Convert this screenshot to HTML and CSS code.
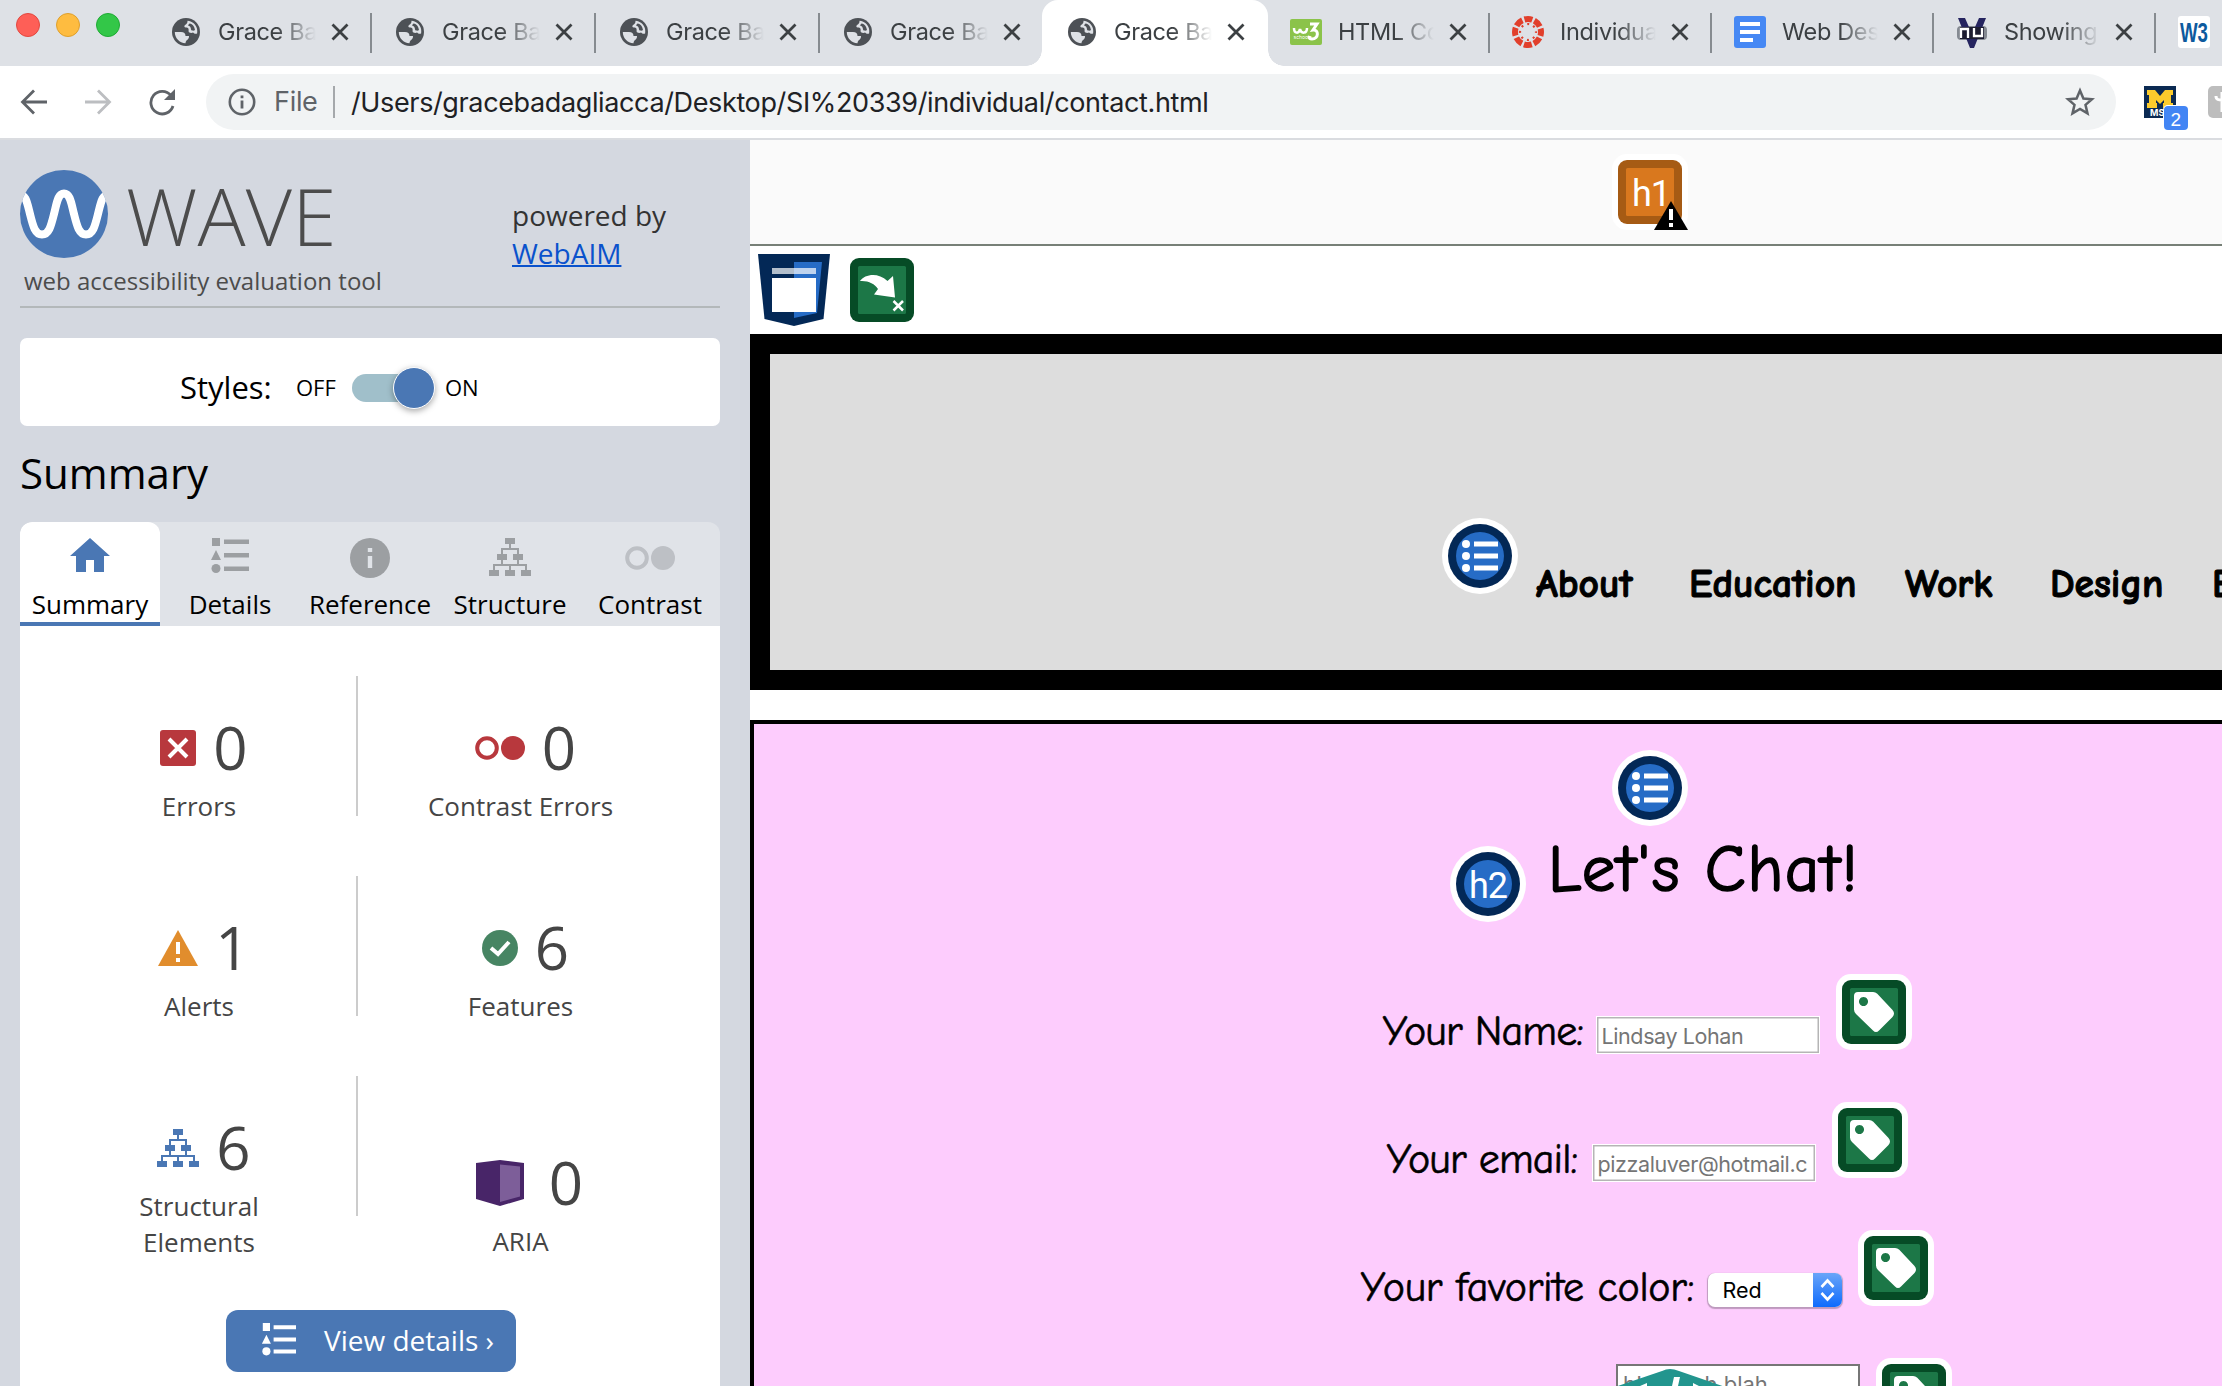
FILE: index.html
```html
<!DOCTYPE html>
<html lang="en">
<head>
<meta charset="utf-8">
<title>Contact</title>
<link rel="stylesheet" href="styles.css">
</head>
<body>
<svg class="defs" width="0" height="0">
  <symbol id="globe" viewBox="0 0 28 28"><circle cx="14" cy="14" r="14" fill="#4d5156"/><path d="M15.500 2.700C20 3 23.500 6 24.800 10c.6 2 .5 4 .3 5.500-1.500.8-3 .2-4-1-1.500.8-4 .6-4.500-1V11.500c0-1.500-1-2-2.800-2-1.500 0-1.800-1-1-2.200C14 6 15.500 6 15.500 2.700zM2.800 14H9c3 0 4.500 1.500 4.500 4h3.500c.3 4-3.200 3.300-3.500 7.200C7.500 25 2.800 20 2.800 14z" fill="#dee1e6"/><path d="M17.500 5.500c3.500.5 5 3.500 5.500 6.500-1 1-3.500 1-4-.500 0-2.500-1.200-3.500-3-4 .3-.8.8-1.400 1.500-2z" fill="#4d5156"/></symbol>
  <symbol id="x" viewBox="0 0 18 18"><path d="M1.500 1.500l15 15M16.500 1.500l-15 15" stroke="#3c4043" stroke-width="2.800" fill="none"/></symbol>
  <symbol id="list" viewBox="0 0 38 42"><path d="M1 0h8v9H1zM5 13l5 10H0zM13 2.500h25v4.500H13zM13 16h25v4.500H13zM13 29.500h25V34H13z"/><circle cx="5" cy="31.500" r="4.500"/></symbol>
  <symbol id="tree" viewBox="0 0 42 38"><path d="M16 0h10v6H16zM8 16h10v6H8zM24 16h10v6H24zM0 32h10v6H0zM16 32h10v6H16zM32 32h10v6H32z"/><path d="M21 6v5M13 16v-5h16v5M13 22v5M29 22v5M5 32v-5h32v5M21 27v5" fill="none" stroke="currentColor" stroke-width="2"/></symbol>
  <symbol id="pair" viewBox="0 0 50 24"><circle cx="12" cy="12" r="9.800" fill="none" stroke="currentColor" stroke-width="4"/><circle cx="38" cy="12" r="12"/></symbol>
  <symbol id="ul" viewBox="0 0 76 76"><circle cx="38" cy="38" r="38" fill="#fff"/><circle cx="38" cy="38" r="32" fill="#032856"/><circle cx="38" cy="38" r="24" fill="#266cc6"/><path d="M32 23.500h24v5H32zM32 35.500h24v5H32zM32 47.500h24v5H32z" fill="#fff"/><circle cx="24" cy="26" r="4" fill="#fff"/><circle cx="24" cy="38" r="4" fill="#fff"/><circle cx="24" cy="50" r="4" fill="#fff"/></symbol>
  <symbol id="tag" viewBox="0 0 76 76"><rect width="76" height="76" rx="15" fill="#fff"/><rect x="6" y="6" width="64" height="64" rx="9" fill="#064b26"/><rect x="14" y="14" width="48" height="48" rx="1.500" fill="#1c7747"/><path fill-rule="evenodd" d="M22 18h15q2.500 0 4.300 1.800L56.500 36q3 3.500 0 7L43 56.500q-3 3-6 0L20 40q-2-2-2-4.500V22q0-4 4-4zM27.500 23a4.500 4.500 0 1 0 .01 0z" fill="#fff"/></symbol>
</svg>

<header class="browser">
  <div class="tabstrip">
    <div class="lights"><i class="light red"></i><i class="light yellow"></i><i class="light green"></i></div>
    <div class="tab"><svg class="globe"><use href="#globe"/></svg><span class="title">Grace Badagliacca</span><svg class="close"><use href="#x"/></svg></div>
    <div class="tab"><svg class="globe"><use href="#globe"/></svg><span class="title">Grace Badagliacca</span><svg class="close"><use href="#x"/></svg></div>
    <div class="tab"><svg class="globe"><use href="#globe"/></svg><span class="title">Grace Badagliacca</span><svg class="close"><use href="#x"/></svg></div>
    <div class="tab last"><svg class="globe"><use href="#globe"/></svg><span class="title">Grace Badagliacca</span><svg class="close"><use href="#x"/></svg></div>
    <div class="tab active"><svg class="globe"><use href="#globe"/></svg><span class="title">Grace Badagliacca</span><svg class="close"><use href="#x"/></svg></div>
    <div class="tab narrow"><svg class="fav" viewBox="0 0 32 32"><rect y="3" width="32" height="26" rx="2" fill="#8bc34a"/><path d="M4 12c0 6 5 6 6 1 1 5 7 5 7-1" fill="none" stroke="#fff" stroke-width="2.500"/><path d="M20 8h7l-4 6c6-1 6 9-1 9-2 0-3-1-3-3" fill="none" stroke="#fff" stroke-width="3"/><text x="3.500" y="23" class="fav-tiny">schools</text></svg><span class="title">HTML Color</span><svg class="close"><use href="#x"/></svg></div>
    <div class="tab narrow"><svg class="fav" viewBox="0 0 32 32"><circle cx="16" cy="16" r="13" fill="none" stroke="#e13f2b" stroke-width="6" stroke-dasharray="8 2.210" stroke-dashoffset="4"/><circle cx="16" cy="16" r="8" fill="none" stroke="#e13f2b" stroke-width="2.200" stroke-dasharray="2 4.280" stroke-dashoffset="1"/></svg><span class="title">Individual</span><svg class="close"><use href="#x"/></svg></div>
    <div class="tab narrow"><svg class="fav" viewBox="0 0 32 32"><rect width="32" height="32" rx="3" fill="#4688f4"/><path d="M6 6h20v4H6zM6 14h20v4H6zM6 22h13v4H6z" fill="#fff"/></svg><span class="title">Web Design</span><svg class="close"><use href="#x"/></svg></div>
    <div class="tab narrow"><svg class="fav" viewBox="0 0 32 32"><rect x="1" y="10" width="30" height="14" rx="4" fill="#555a66" opacity=".65"/><path d="M2 2h7l7 16 7-16h7L18 32h-4z" fill="#25245f"/><path d="M4 11h24v12H4z" fill="#1c1c30"/><path d="M5 22V13h7v9M18 12v8h8v-8" fill="none" stroke="#fff" stroke-width="2.300"/></svg><span class="title">Showing results</span><svg class="close"><use href="#x"/></svg></div>
    <div class="tab narrow last"><svg class="fav" viewBox="0 0 32 32"><rect width="32" height="32" rx="3" fill="#fff"/><text x="2" y="25.500" class="fav-w3" textLength="28" lengthAdjust="spacingAndGlyphs">W3</text></svg></div>
  </div>
  <div class="toolbar">
    <svg class="nav-icon" viewBox="0 0 28 28"><path d="M27 14H3M14 2.500L2.500 14 14 25.500" stroke="#5f6368" stroke-width="2.800" fill="none"/></svg>
    <svg class="nav-icon" viewBox="0 0 28 28"><path d="M1 14h24M14 2.500L25.500 14 14 25.500" stroke="#bcbec1" stroke-width="2.800" fill="none"/></svg>
    <svg class="nav-icon" viewBox="0 0 28 28"><path d="M23 7.500A11.300 11.300 0 1 0 25 18" stroke="#5f6368" stroke-width="2.800" fill="none"/><path d="M27 1v11H16z" fill="#5f6368"/></svg>
    <div class="omnibox">
      <svg class="info" viewBox="0 0 28 28"><circle cx="14" cy="14" r="12.200" fill="none" stroke="#5f6368" stroke-width="2.600"/><path d="M12.600 12.500h2.800v8h-2.800zM12.600 7.500h2.800v2.800h-2.800z" fill="#5f6368"/></svg>
      <span class="scheme">File</span>
      <span class="url">/Users/gracebadagliacca/Desktop/SI%20339/individual/contact.html</span>
      <svg class="star" viewBox="0 0 30 30"><path d="M15 3.500l3.400 8 8.600.700-6.500 5.700 2 8.500L15 21.900l-7.500 4.500 2-8.500L3 12.200l8.600-.7z" fill="none" stroke="#5f6368" stroke-width="2.500"/></svg>
    </div>
    <svg class="ext" viewBox="0 0 46 46"><rect y="1" width="32" height="32" fill="#0b2a52"/><path d="M3 5h8l5 6 5-6h8v5h-2v8h2v5H19v-5h1v-3l-4 4-4-4v3h1v5H3v-5h2v-8H3z" fill="#fbcb2c"/><text x="6" y="31" class="ext-text">MSU</text><rect x="19" y="20" width="26" height="26" rx="5" fill="#fff"/><rect x="20" y="21" width="24" height="24" rx="4" fill="#4285f4"/><text x="26.500" y="40.500" class="badge-num">2</text></svg>
    <svg class="ext2" viewBox="0 0 32 32"><rect width="32" height="32" rx="5" fill="#bdbdbd"/><path d="M8 10c0 4 3 4 6 4M14 6v20" stroke="#fff" stroke-width="3" fill="none"/></svg>
  </div>
</header>

<div class="view">
<aside class="wave">
  <div class="brand">
    <div class="brand-left">
      <div class="logo-row">
        <svg class="logo" viewBox="0 0 88 88"><clipPath id="c"><circle cx="44" cy="44" r="44"/></clipPath><circle cx="44" cy="44" r="44" fill="#4a77b4"/><path clip-path="url(#c)" d="M-2 24C6 24 7 32 10 44s5 20.500 12 20.500S31 56 34 44s4-20.500 10-20.500S51 32 54 44s5 20.500 12 20.500S75 56 78 44s4-20 12-20" fill="none" stroke="#fff" stroke-width="8"/></svg>
        <span class="wordmark">WAVE</span>
      </div>
      <div class="tagline">web accessibility evaluation tool</div>
    </div>
    <div class="powered">powered by<br><a>WebAIM</a></div>
  </div>
  <div class="styles-panel"><span class="styles-label">Styles:</span><span class="onoff off">OFF</span><span class="track"><i class="knob"></i></span><span class="onoff">ON</span></div>
  <h1 class="heading">Summary</h1>
  <nav class="panel-tabs">
    <div class="ptab current"><svg viewBox="0 0 40 40"><path d="M20 0L0 18h6v16h10V22h8v12h10V18h6z"/></svg><span>Summary</span></div>
    <div class="ptab"><svg class="w38" viewBox="0 0 38 40"><use href="#list" y="-1" width="38" height="42"/></svg><span>Details</span></div>
    <div class="ptab"><svg viewBox="0 0 40 40"><circle cx="20" cy="20" r="20"/><path d="M17.800 10h4.400v4h-4.400zM17.800 18h4.400v12h-4.400z" fill="#e0e3e8"/></svg><span>Reference</span></div>
    <div class="ptab"><svg class="w42" viewBox="0 0 42 40"><use href="#tree" width="42" height="38"/></svg><span>Structure</span></div>
    <div class="ptab pale"><svg class="w50" viewBox="0 0 50 40"><use href="#pair" y="8" width="50" height="24"/></svg><span>Contrast</span></div>
  </nav>
  <div class="panel">
    <div class="stat-row">
      <div class="stat"><div class="count"><svg width="36" height="36" viewBox="0 0 36 36"><rect width="36" height="36" rx="3" fill="#b8383d"/><path d="M9 9l18 18M27 9L9 27" stroke="#fff" stroke-width="4"/></svg><b>0</b></div><span>Errors</span></div>
      <div class="stat"><div class="count"><svg class="pair" width="50" height="24"><use href="#pair"/></svg><b>0</b></div><span>Contrast Errors</span></div>
    </div>
    <div class="stat-row">
      <div class="stat"><div class="count"><svg width="40" height="36" viewBox="0 0 40 36"><path d="M20 0l20 36H0z" fill="#e18d2d"/><path d="M18 12h4v12h-4zM18 28h4v4h-4z" fill="#fff"/></svg><b>1</b></div><span>Alerts</span></div>
      <div class="stat"><div class="count"><svg width="36" height="36" viewBox="0 0 36 36"><circle cx="18" cy="18" r="18" fill="#478563"/><path d="M9 18l7 6 11-12" stroke="#fff" stroke-width="4" fill="none"/></svg><b>6</b></div><span>Features</span></div>
    </div>
    <div class="stat-row tall">
      <div class="stat"><div class="count"><svg class="tree" width="42" height="38"><use href="#tree"/></svg><b>6</b></div><span>Structural<br>Elements</span></div>
      <div class="stat low"><div class="count aria"><svg width="48" height="46" viewBox="0 0 48 46"><path d="M0 3L24 0l24 3v36L24 46 0 39z" fill="#482568"/><path d="M24 4.500l20 2v30L24 42z" fill="#7d5e99"/></svg><b>0</b></div><span>ARIA</span></div>
    </div>
    <div class="details-btn"><svg width="38" height="36" viewBox="0 0 38 40"><use href="#list" width="38" height="42"/></svg><span>View details ›</span></div>
  </div>
</aside>

<main class="page">
  <div class="banner">
    <svg width="76" height="76" viewBox="0 0 76 76"><rect width="76" height="76" rx="15" fill="#fff"/><rect x="6" y="6" width="64" height="64" rx="9" fill="#a65b14"/><rect x="14" y="14" width="48" height="48" rx="1.500" fill="#d9781e"/><text x="20" y="52" class="hx" textLength="39">h1</text><path d="M59 47l17 29H42z" fill="#000"/><path d="M57 55h4v11h-4zM57 69h4v4h-4z" fill="#fff"/></svg>
  </div>
  <div class="skip">
    <svg width="72" height="72" viewBox="0 0 72 72"><path d="M0 0h72l-6.500 65L36 72 6.500 65z" fill="#032856"/><path d="M36 8h28l-5 51-23 5z" fill="#266cc6"/><path d="M14 14h44v6H14z" fill="#fff" opacity=".7"/><path d="M14 24h44v34H14z" fill="#fff"/></svg>
    <svg width="64" height="64" viewBox="0 0 64 64"><rect width="64" height="64" rx="9" fill="#064b26"/><rect x="8" y="8" width="48" height="48" rx="1.500" fill="#1c7747"/><path d="M10 23c5-7 18-9 27.500 0L43 18l2 21.500-21-3L28 31c-3-5-9-8-16-8z" fill="#fff"/><path d="M43.500 43l9.500 9.500M53 43l-9.500 9.500" stroke="#fff" stroke-width="2.500"/></svg>
  </div>
  <div class="hero">
    <svg class="ul" width="76" height="76"><use href="#ul"/></svg>
    <nav class="site-nav"><a class="n1">About</a><a class="n2">Education</a><a class="n3">Work</a><a class="n4">Design</a><a class="n5">Extra</a></nav>
  </div>
  <section class="contact">
    <svg class="top-ul" width="76" height="76"><use href="#ul"/></svg>
    <div class="title-row"><svg width="76" height="76" viewBox="0 0 76 76"><circle cx="38" cy="38" r="38" fill="#fff"/><circle cx="38" cy="38" r="32" fill="#032856"/><circle cx="38" cy="38" r="24" fill="#266cc6"/><text x="19" y="52" class="hx" textLength="39">h2</text></svg><h2 class="chat">Let's Chat!</h2></div>
    <div class="field f1"><label class="hand">Your Name:</label><span class="input">Lindsay Lohan</span><svg width="76" height="76"><use href="#tag"/></svg></div>
    <div class="field f2"><label class="hand">Your email:</label><span class="input">pizzaluver@hotmail.c</span><svg width="76" height="76"><use href="#tag"/></svg></div>
    <div class="field f3"><label class="hand">Your favorite color:</label><span class="select"><span class="opt">Red</span><svg width="29" height="34" viewBox="0 0 29 34"><path d="M8.500 14l6-6.500 6 6.500M8.500 20l6 6.500 6-6.500" fill="none" stroke="#fff" stroke-width="2.600"/></svg></span><svg width="76" height="76"><use href="#tag"/></svg></div>
    <div class="field f4"><span class="textarea">blah blah blah</span><svg width="76" height="76"><use href="#tag"/></svg></div>
  </section>
  <svg class="code-tab" width="128" height="17" viewBox="0 0 128 17"><path d="M64 0Q68 0 73 2L128 21H0L56 2Q60 0 64 0z" fill="#22958e"/><path d="M68 8h6l-2 9h-6zM34 17l7-3v3zM87 14l6 3h-6z" fill="#fff"/></svg>
</main>
</div>
</body>
</html>
```
FILE: styles.css
```css
* { box-sizing: border-box; }
body { margin: 0; width: 2222px; height: 1386px; overflow: hidden; background: #fff; font-family: "Open Sans", sans-serif; color: #000; }
svg { display: block; flex: none; }
.defs { position: absolute; }
i { display: block; }

/* Browser chrome */
.browser { height: 140px; border-bottom: 2px solid #dadce0; font-family: Inter, sans-serif; background: #fff; overflow: hidden; }
.tabstrip { display: flex; height: 66px; background: #dee1e6; overflow: hidden; }
.lights { display: flex; gap: 16px; width: 148px; padding: 13px 0 0 16px; flex: none; }
.light { width: 24px; height: 24px; border-radius: 50%; border: 1px solid; }
.red { background: #fe5f57; border-color: #e2483f; }
.yellow { background: #febc40; border-color: #dfa02c; }
.green { background: #33c748; border-color: #1fab34; }
.tab { display: flex; align-items: center; width: 224px; height: 66px; padding: 0 23px 2px 24px; position: relative; flex: none; }
.tab:not(.last):not(.active)::after { content: ""; position: absolute; right: 0; top: 13px; width: 2px; height: 40px; background: #868b90; }
.narrow { width: 222px; padding-left: 22px; }
.globe { width: 28px; height: 28px; }
.fav { width: 32px; height: 32px; }
.fav-tiny { font: 5px Inter, sans-serif; fill: #fff; }
.fav-w3 { font: 600 27px "Liberation Sans", sans-serif; fill: #0d5a9e; }
.title { width: 98px; margin: 0 15px 0 18px; overflow: hidden; white-space: nowrap; font-size: 23.500px; line-height: 32px; letter-spacing: -.35px; color: #3c4043; -webkit-mask-image: linear-gradient(90deg, #000 60%, transparent); mask-image: linear-gradient(90deg, #000 60%, transparent); }
.narrow .title { margin: 0 15px 0 16px; width: 97px; }
.close { width: 18px; height: 18px; }
.active { width: 226px; margin-left: -2px; padding-left: 26px; background: #fff; border-radius: 16px 16px 0 0; }
.active::before, .active::after { content: ""; position: absolute; bottom: 0; width: 16px; height: 16px; }
.active::before { left: -16px; background: radial-gradient(circle at 0 0, #dee1e6 15.500px, #fff 16px); }
.active::after { right: -16px; background: radial-gradient(circle at 100% 0, #dee1e6 15.500px, #fff 16px); }
.toolbar { display: flex; align-items: center; height: 72px; padding-left: 20px; overflow: hidden; }
.nav-icon { width: 28px; height: 28px; margin-right: 36px; flex: none; }
.nav-icon:nth-of-type(3) { margin-right: 30px; }
.omnibox { display: flex; flex: none; align-items: center; width: 1910px; height: 56px; border-radius: 28px; background: #f1f3f4; padding: 0 21px 0 22px; font-size: 27px; }
.info { width: 28px; height: 28px; }
.scheme { width: 61px; margin-left: 18px; height: 32px; line-height: 31px; border-right: 2px solid #a5a8ab; color: #5f6368; letter-spacing: -.3px; }
.url { margin-left: 16px; white-space: nowrap; color: #202124; letter-spacing: -.370px; }
.star { width: 30px; height: 30px; margin-left: auto; }
.ext { width: 46px; height: 46px; margin: 12px 0 0 28px; }
.ext2 { width: 32px; height: 32px; margin-left: 18px; }
.ext-text { font: bold 9px Inter, sans-serif; fill: #fff; }
.badge-num { font: 500 19px "Liberation Sans", sans-serif; fill: #fff; }

/* Evaluation sidebar */
.view { display: flex; height: 1246px; overflow: hidden; }
.wave { width: 750px; flex: none; padding: 30px 30px 0 20px; background: #d4d8e0; }
.brand { display: flex; height: 138px; border-bottom: 2px solid #b3b8ba; }
.brand-left { width: 492px; }
.logo-row { display: flex; height: 88px; }
.logo { width: 88px; height: 88px; }
.wordmark { margin-left: 18px; font-size: 80px; line-height: 89px; font-weight: 300; letter-spacing: .2px; color: #4c4c4c; }
.tagline { padding-left: 4px; margin-top: 5px; font-size: 24px; line-height: 36px; color: #4c4c4c; white-space: nowrap; }
.powered { padding-top: 26px; font-size: 28px; line-height: 38px; color: #333; }
.powered a { color: #0a52cc; text-decoration: underline; text-decoration-thickness: 2px; }
.styles-panel { display: flex; align-items: center; height: 88px; margin-top: 30px; padding: 10px 0 0 160px; border-radius: 7px; background: #fff; }
.styles-label { width: 116px; font-size: 31px; line-height: 40px; }
.onoff { font-size: 22px; }
.off { width: 56px; }
.track { position: relative; top: 1px; width: 82px; height: 28px; margin-right: 11px; border-radius: 14px; background: #a0bfca; }
.knob { position: absolute; right: -1px; top: -7px; width: 42px; height: 42px; border-radius: 50%; background: #4a77b4; border: 1.500px solid #fff; box-shadow: 0 2px 6px rgba(0,0,0,.35); }
.heading { margin: 20px 0 0; font-weight: 400; font-size: 42px; line-height: 54px; height: 76px; }
.panel-tabs { display: flex; height: 104px; border-radius: 12px 12px 0 0; background: #e0e3e8; overflow: hidden; }
.ptab { display: flex; flex-direction: column; align-items: center; width: 140px; padding-top: 16px; color: #9c9fa2; fill: #9c9fa2; }
.ptab svg { width: 40px; height: 40px; }
.ptab .w38 { width: 38px; } .ptab .w42 { width: 42px; } .ptab .w50 { width: 50px; }
.ptab span { color: #000; font-size: 26px; line-height: 36px; margin-top: 8px; }
.current { background: #fff; fill: #4a77b4; border-radius: 12px 12px 0 0; border-bottom: 4px solid #4a77b4; }
.pale { color: #bdc0c5; fill: #bdc0c5; }
.panel { height: 764px; padding-top: 50px; background: #fff; color: #454545; }
.stat-row { display: flex; height: 140px; margin-bottom: 60px; }
.stat { width: 338px; height: 140px; padding: 38px 0 0 22px; text-align: center; font-size: 26px; line-height: 36px; }
.stat:first-child { border-right: 2px solid #ccc; }
.stat + .stat { width: 324px; padding-left: 1px; }
.stat.low { padding-top: 73px; }
.count { display: flex; justify-content: center; align-items: center; height: 68px; gap: 17px; padding-left: 10px; margin-bottom: 6px; }
.count b { font-size: 60px; font-weight: 400; line-height: 68px; margin-top: -3px; }
.pair { color: #b8383d; fill: #b8383d; }
.tree { color: #4a77b4; fill: #4a77b4; }
.aria { gap: 25px; padding-left: 18px; }
.details-btn { display: flex; align-items: center; width: 290px; height: 62px; margin: 94px 0 0 206px; padding-left: 34px; border-radius: 12px; background: #4a77b4; color: #fff; fill: #fff; font-size: 28px; }
.details-btn span { margin: -3px 0 0 26px; white-space: nowrap; }

/* Evaluated page */
.page { position: relative; width: 1800px; flex: none; background: #fff; overflow: hidden; }
.banner { display: flex; justify-content: center; height: 106px; padding-top: 14px; background: #fafafa; border-bottom: 2px solid #778077; }
.skip { display: flex; height: 88px; padding: 8px 0 0 8px; gap: 20px; }
.skip svg + svg { margin-top: 4px; }
.hx { font: 36px Roboto, sans-serif; fill: #fff; }
.hero { display: flex; height: 356px; border: 20px solid #000; background: #ddd; padding: 164px 0 0 672px; }
.site-nav { display: flex; margin-left: 18px; padding-top: 44px; font: 700 39.500px/44px "Comic Sans MS", "Comic Neue", cursive; -webkit-text-stroke: 1px #000; white-space: nowrap; }
.n1 { width: 153px; } .n2 { width: 216px; } .n3 { width: 145px; } .n4 { width: 162px; }
.contact { height: 900px; margin-top: 30px; border: 4px solid #000; background: #fdccfd; }
.top-ul { margin: 26px auto 0; }
.title-row { display: flex; padding-left: 696px; margin-top: 20px; }
.chat { margin: -18px 0 0 22px; font: 400 67px/84px "Comic Sans MS", "Comic Neue", cursive; letter-spacing: 1.400px; -webkit-text-stroke: 1.600px #000; height: 77px; white-space: nowrap; }
.field { display: flex; justify-content: center; height: 128px; padding-right: 6px; }
.f1 { margin-top: 52px; }
.hand { margin-top: 32px; font: 400 42px/52px "Comic Sans MS", "Comic Neue", cursive; letter-spacing: -.9px; -webkit-text-stroke: .600px #000; white-space: nowrap; }
.f1 .hand { width: 213px; } .f2 .hand { width: 205px; } .f3 .hand { width: 347px; letter-spacing: -.250px; }
.input { width: 224px; height: 38px; margin: 42px 16px 0 0; padding: 0 5px; border: 1px solid #fff; box-shadow: inset 0 0 0 1.500px #b5b5b5; background: #fff; color: #757575; font: 21.500px/38px Inter, sans-serif; letter-spacing: -.4px; overflow: hidden; white-space: nowrap; }
.select { display: flex; width: 134px; height: 34px; margin: 43px 16px 0 0; border-radius: 7px; background: #fff; box-shadow: 0 1px 1px 1px rgba(0,0,0,.25); overflow: hidden; font: 21.500px/34px Inter, sans-serif; }
.opt { width: 105px; padding-left: 15px; }
.select svg { background: linear-gradient(#6aa5f8, #0e6bfd); }
.f4 { padding: 0 0 0 268px; }
.textarea { width: 244px; height: 60px; margin: 6px 16px 0 0; border: 2px solid #767676; background: #fff; padding: 2px 5px; color: #757575; font: 22px/32px Inter, sans-serif; }
.code-tab { position: absolute; left: 856px; bottom: 0; }
```
